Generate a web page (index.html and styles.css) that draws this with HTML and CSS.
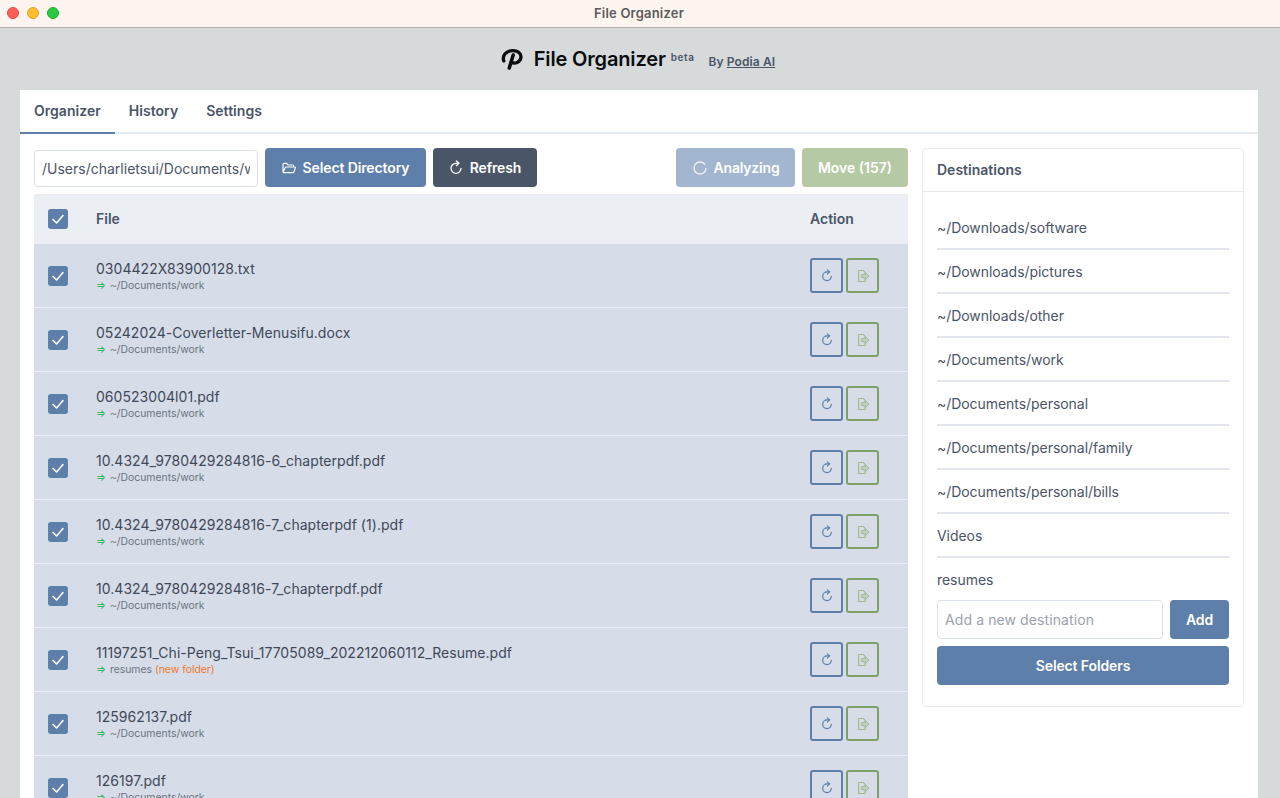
FILE: index.html
```html
<!DOCTYPE html>
<html lang="en">
<head>
<meta charset="utf-8">
<title>File Organizer</title>
<link rel="stylesheet" href="styles.css">
</head>
<body>
<svg class="defs" width="0" height="0">
  <symbol id="redo" viewBox="0 0 24 24"><path d="M19.500 12.500a7.500 7.500 0 1 1-7.500-7.500h3.500" fill="none" stroke="currentColor" stroke-width="2" stroke-linecap="round"/><path d="M12.500 1.500 16.500 5l-4 3.500" fill="none" stroke="currentColor" stroke-width="2" stroke-linecap="round" stroke-linejoin="round"/></symbol>
  <symbol id="move" viewBox="0 0 16 16"><path d="M10.500 6V4.200L8.300 1.700H3v12.600h7.500v-3.800" fill="none" stroke="currentColor" stroke-width="1.300" stroke-linejoin="round"/><path d="M6.500 6.300h4.200V4.300L15 8.200l-4.300 3.900V10H6.500z" fill="currentColor" fill-opacity=".35" stroke="currentColor" stroke-width="1.100" stroke-linejoin="round"/></symbol>
  <symbol id="check" viewBox="0 0 20 20"><path d="M5 10.500 8.600 14 15 6.500" fill="none" stroke="#fff" stroke-width="1.500" stroke-linecap="round" stroke-linejoin="round"/></symbol>
</svg>
<div class="titlebar">
  <div class="lights"><span class="light red"></span><span class="light yellow"></span><span class="light green"></span></div>
  <span class="wintitle">File Organizer</span>
</div>
<div class="app">
  <header class="brand">
    <svg class="logo" viewBox="0 0 24 24"><path d="M3.800 14C1.800 8.300 6.500 3.600 13 3.600c5.500 0 8.700 3.500 7.800 7.600-.9 4-5.600 6-9.500 4.300" fill="none" stroke="#0b0c0e" stroke-width="3.300" stroke-linecap="round"/><path d="M13.200 8 9.300 21" fill="none" stroke="#0b0c0e" stroke-width="3.500" stroke-linecap="round"/></svg>
    <h1 class="brand-name">File Organizer</h1>
    <sup class="beta">beta</sup>
    <span class="by">By <a class="by-link" href="#">Podia AI</a></span>
  </header>
  <main class="card">
    <nav class="tabs">
      <a class="tab active">Organizer</a>
      <a class="tab">History</a>
      <a class="tab">Settings</a>
    </nav>
    <div class="content">
      <section class="left">
        <div class="toolbar">
          <input class="path" value="/Users/charlietsui/Documents/work" readonly>
          <button class="btn blue select">
            <svg class="ic" viewBox="0 0 24 24"><path d="M3 18.500V6.500C3 5.700 3.700 5 4.500 5h4l2 2.500h7c.8 0 1.500.7 1.500 1.500v1.500M3 18.500c0 .3.300.5.700.5h14.500c.5 0 .9-.3 1-.7l2.300-6.600c.2-.7-.3-1.200-1-1.200H7.500c-.5 0-.9.300-1.100.8z" fill="none" stroke="currentColor" stroke-width="1.700" stroke-linejoin="round"/></svg>
            Select Directory
          </button>
          <button class="btn slate refresh"><svg class="ic"><use href="#redo"/></svg>Refresh</button>
          <span class="spacer"></span>
          <button class="btn blue faded analyzing">
            <svg class="ic spin" viewBox="0 0 24 24"><circle cx="12" cy="12" r="9" fill="none" stroke="currentColor" stroke-width="2" stroke-dasharray="50 7" stroke-opacity=".8"/></svg>
            Analyzing
          </button>
          <button class="btn sage">Move (157)</button>
        </div>
        <div class="table">
          <div class="row head">
            <span class="cb"><svg><use href="#check"/></svg></span>
            <span class="file-h">File</span>
            <span class="action-h">Action</span>
          </div>
          <div class="row item">
            <span class="cb"><svg><use href="#check"/></svg></span>
            <div class="file"><div class="fname">0304422X83900128.txt</div><div class="dest"><span class="arrow">⇒</span>~/Documents/work</div></div>
            <div class="acts"><button class="act a-blue"><svg><use href="#redo"/></svg></button><button class="act a-green"><svg><use href="#move"/></svg></button></div>
          </div>
          <div class="row item">
            <span class="cb"><svg><use href="#check"/></svg></span>
            <div class="file"><div class="fname">05242024-Coverletter-Menusifu.docx</div><div class="dest"><span class="arrow">⇒</span>~/Documents/work</div></div>
            <div class="acts"><button class="act a-blue"><svg><use href="#redo"/></svg></button><button class="act a-green"><svg><use href="#move"/></svg></button></div>
          </div>
          <div class="row item">
            <span class="cb"><svg><use href="#check"/></svg></span>
            <div class="file"><div class="fname">060523004l01.pdf</div><div class="dest"><span class="arrow">⇒</span>~/Documents/work</div></div>
            <div class="acts"><button class="act a-blue"><svg><use href="#redo"/></svg></button><button class="act a-green"><svg><use href="#move"/></svg></button></div>
          </div>
          <div class="row item">
            <span class="cb"><svg><use href="#check"/></svg></span>
            <div class="file"><div class="fname">10.4324_9780429284816-6_chapterpdf.pdf</div><div class="dest"><span class="arrow">⇒</span>~/Documents/work</div></div>
            <div class="acts"><button class="act a-blue"><svg><use href="#redo"/></svg></button><button class="act a-green"><svg><use href="#move"/></svg></button></div>
          </div>
          <div class="row item">
            <span class="cb"><svg><use href="#check"/></svg></span>
            <div class="file"><div class="fname">10.4324_9780429284816-7_chapterpdf (1).pdf</div><div class="dest"><span class="arrow">⇒</span>~/Documents/work</div></div>
            <div class="acts"><button class="act a-blue"><svg><use href="#redo"/></svg></button><button class="act a-green"><svg><use href="#move"/></svg></button></div>
          </div>
          <div class="row item">
            <span class="cb"><svg><use href="#check"/></svg></span>
            <div class="file"><div class="fname">10.4324_9780429284816-7_chapterpdf.pdf</div><div class="dest"><span class="arrow">⇒</span>~/Documents/work</div></div>
            <div class="acts"><button class="act a-blue"><svg><use href="#redo"/></svg></button><button class="act a-green"><svg><use href="#move"/></svg></button></div>
          </div>
          <div class="row item">
            <span class="cb"><svg><use href="#check"/></svg></span>
            <div class="file"><div class="fname">11197251_Chi-Peng_Tsui_17705089_202212060112_Resume.pdf</div><div class="dest"><span class="arrow">⇒</span>resumes <span class="newf">(new folder)</span></div></div>
            <div class="acts"><button class="act a-blue"><svg><use href="#redo"/></svg></button><button class="act a-green"><svg><use href="#move"/></svg></button></div>
          </div>
          <div class="row item">
            <span class="cb"><svg><use href="#check"/></svg></span>
            <div class="file"><div class="fname">125962137.pdf</div><div class="dest"><span class="arrow">⇒</span>~/Documents/work</div></div>
            <div class="acts"><button class="act a-blue"><svg><use href="#redo"/></svg></button><button class="act a-green"><svg><use href="#move"/></svg></button></div>
          </div>
          <div class="row item">
            <span class="cb"><svg><use href="#check"/></svg></span>
            <div class="file"><div class="fname">126197.pdf</div><div class="dest"><span class="arrow">⇒</span>~/Documents/work</div></div>
            <div class="acts"><button class="act a-blue"><svg><use href="#redo"/></svg></button><button class="act a-green"><svg><use href="#move"/></svg></button></div>
          </div>
        </div>
      </section>
      <aside class="panel">
        <div class="panel-head">Destinations</div>
        <div class="panel-body">
          <ul class="dlist">
            <li>~/Downloads/software</li>
            <li>~/Downloads/pictures</li>
            <li>~/Downloads/other</li>
            <li>~/Documents/work</li>
            <li>~/Documents/personal</li>
            <li>~/Documents/personal/family</li>
            <li>~/Documents/personal/bills</li>
            <li>Videos</li>
            <li>resumes</li>
          </ul>
          <div class="addrow">
            <input class="newdest" placeholder="Add a new destination">
            <button class="btn blue add">Add</button>
          </div>
          <button class="btn blue folders">Select Folders</button>
        </div>
      </aside>
    </div>
  </main>
</div>
</body>
</html>
```
FILE: styles.css
```css
* { box-sizing: border-box; }
html, body { margin: 0; height: 798px; overflow: hidden; }
body { font-family: Inter, "Liberation Sans", sans-serif; background: #d6dadb; color: #4a5568; }
.defs { position: absolute; }
.titlebar { height: 28px; background: #fff5f0; border-bottom: 1px solid #b5b2ae; display: flex; align-items: center; justify-content: center; position: relative; padding: 0 2px 2px 0; }
.lights { position: absolute; left: 7px; top: 7px; display: flex; gap: 8px; }
.light { width: 12px; height: 12px; border-radius: 50%; }
.red { background: #ff5f57; border: 1px solid #e5493f; }
.yellow { background: #febc2e; border: 1px solid #e5a324; }
.green { background: #28c840; border: 1px solid #1fae33; }
.wintitle { font-size: 13px; font-weight: 600; color: #5a5a5a; letter-spacing: .2px; }
.app { padding: 0 22px 0 20px; }
.brand { height: 62px; display: flex; align-items: center; justify-content: center; padding-right: 3px; }
.logo { width: 24px; height: 24px; margin-right: 10px; }
.brand-name { font-size: 20px; font-weight: 600; color: #0b0c0e; margin: 0; letter-spacing: -.16px; }
.beta { font-size: 10px; font-weight: 600; color: #4a5568; margin: 0 14px 0 5px; position: relative; top: -2px; letter-spacing: .6px; }
.by { font-size: 12px; font-weight: 600; color: #4a5568; position: relative; top: 2px; letter-spacing: .1px; }
.by-link { color: #4a5568; text-decoration: underline; }
.card { background: #fff; height: 708px; overflow: hidden; }
.tabs { display: flex; height: 44px; border-bottom: 2px solid #e6ebf2; }
.tab { height: 44px; padding: 0 14px; font-size: 14px; font-weight: 600; color: #4a5568; line-height: 42px; letter-spacing: .03px; }
.tab.active { border-bottom: 2px solid #5e7fa9; }
.content { display: flex; padding: 14px 14px 0; gap: 14px; align-items: flex-start; }
.left { width: 874px; flex: none; }
.toolbar { display: flex; align-items: center; gap: 7px; height: 39px; margin-bottom: 7px; }
.path { width: 224px; height: 37px; margin-top: 2px; padding: 0 7px; border: 1px solid #dbe1ec; border-radius: 4px; font: 14px Inter, "Liberation Sans", sans-serif; color: #4a5568; background: #fff; outline: none; }
.spacer { flex: 1; }
.btn { height: 39px; border: 0; border-radius: 4px; color: #fff; font: 600 14px Inter, "Liberation Sans", sans-serif; letter-spacing: -.12px; display: inline-flex; align-items: center; justify-content: center; padding: 0; }
.blue { background: #5e7fa9; }
.slate { background: #4a5568; }
.sage { background: #b6c9a5; width: 106px; letter-spacing: 0; }
.faded { background: #a3b6cf; }
.select { width: 161px; padding-right: 1px; }
.refresh { width: 104px; padding-right: 1px; }
.analyzing { width: 119px; letter-spacing: -.2px; }
.ic { width: 16px; height: 16px; margin-right: 6px; }
.spin { color: #fff; }
.table { width: 874px; }
.row { display: flex; align-items: center; padding-left: 14px; }
.head { height: 49px; background: #ebeff4; }
.item { height: 64px; background: #d6dde9; border-top: 1px solid #ebeff4; }
.cb { width: 20px; height: 20px; background: #5e7fa9; border-radius: 3px; flex: none; margin-right: 28px; }
.item .cb { margin-top: 1px; }
.cb svg { width: 20px; height: 20px; display: block; }
.file-h { font-size: 14px; font-weight: 600; flex: 1; }
.action-h { font-size: 14px; font-weight: 600; width: 98px; }
.file { flex: 1; min-width: 0; padding-top: 2px; }
.fname { font-size: 14px; line-height: 17px; color: #3f4858; letter-spacing: .04px; }
.dest { font-size: 10.400px; line-height: 14px; margin-top: 2px; color: #6b7380; }
.arrow { color: #22b04a; margin-right: 4px; }
.newf { color: #f0782a; }
.acts { width: 98px; display: flex; gap: 3px; }
.act { width: 33px; height: 35px; border-radius: 3px; background: none; padding: 0; display: flex; align-items: center; justify-content: center; }
.act svg { width: 14px; height: 14px; }
.a-blue { border: 2px solid #5e7fa9; color: #5e7fa9; }
.a-green { border: 2px solid #7ea264; color: #9dba88; }
.panel { width: 322px; flex: none; height: 559px; border: 1px solid #e6ebf2; border-radius: 4px; }
.panel-head { height: 43px; padding: 0 14px; line-height: 42px; font-size: 14px; font-weight: 600; border-bottom: 1px solid #e6ebf2; }
.panel-body { padding: 14px 14px 0; }
.dlist { list-style: none; margin: 0; padding: 0; }
.dlist li { height: 44px; font-size: 14px; line-height: 44px; border-bottom: 2px solid #e2e6ec; letter-spacing: -.05px; }
.dlist li:last-child { border-bottom: 0; height: 42px; }
.addrow { display: flex; gap: 7px; margin-bottom: 7px; }
.newdest { width: 226px; height: 39px; padding: 0 7px; border: 1px solid #dbe1ec; border-radius: 4px; font: 14px Inter, "Liberation Sans", sans-serif; outline: none; letter-spacing: .1px; }
.newdest::placeholder { color: #9aa2af; }
.add { width: 59px; }
.folders { width: 100%; }
```
